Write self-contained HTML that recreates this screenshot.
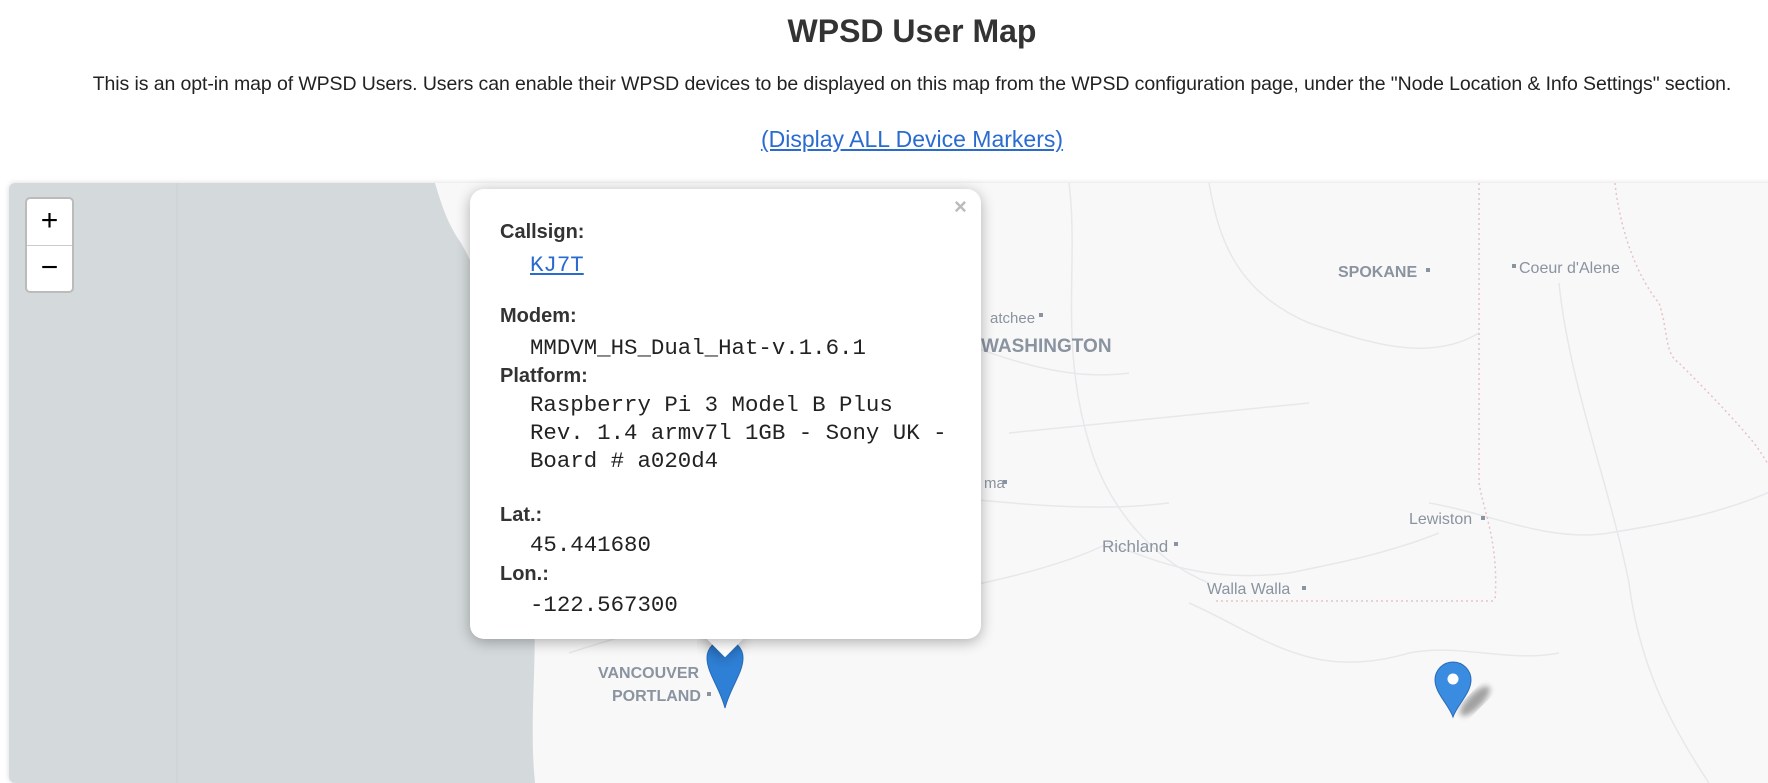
<!DOCTYPE html>
<html><head><meta charset="utf-8"><style>
*{margin:0;padding:0;box-sizing:border-box}
body{width:1768px;height:766px;overflow:hidden;background:#fff;font-family:"Liberation Sans",sans-serif;color:#333;position:relative}
h1{position:absolute;top:13px;left:0;width:1824px;text-align:center;font-size:32px;font-weight:bold;color:#333}
p.d{position:absolute;top:73px;left:0;width:1824px;text-align:center;font-size:19.5px;color:#222;letter-spacing:-0.1px}
a.all{position:absolute;top:126px;left:0;width:1824px;text-align:center;font-size:23px;color:#2a6bd0;text-decoration:underline}
#map{position:absolute;left:9px;top:183px;width:1780px;height:600px;background:#f8f8f8;border-radius:6px;overflow:hidden;box-shadow:0 0 6px rgba(0,0,0,.15)}
.zc{position:absolute;left:25px;top:197px;width:49px;height:96px;border:2px solid #bbb;border-radius:5px;background:#fff}
.zc div{height:46px;text-align:center;font-size:30px;line-height:44px;color:#000}
.zc div+div{border-top:1px solid #ccc}
.pop{position:absolute;left:470px;top:189px;width:511px;height:450px;background:#fff;border-radius:14px;box-shadow:0 3px 14px rgba(0,0,0,.3)}
.tip{position:absolute;left:697px;top:637px;width:56px;height:30px;overflow:hidden}
.tip div{width:30px;height:30px;background:#fff;transform:rotate(45deg);margin:-16px auto 0;box-shadow:0 3px 14px rgba(0,0,0,.3)}
.l{position:absolute;left:500px;font-size:20px;font-weight:bold;color:#333}
.v{position:absolute;left:530px;font-family:"Liberation Mono",monospace;font-size:22.4px;color:#222}
.x{position:absolute;left:954px;top:194px;font-size:22px;color:#bbb;font-weight:bold}
svg text{font-family:"Liberation Sans",sans-serif;fill:#8a93a0}
</style></head><body>
<h1>WPSD User Map</h1>
<p class="d">This is an opt-in map of WPSD Users. Users can enable their WPSD devices to be displayed on this map from the WPSD configuration page, under the "Node Location &amp; Info Settings" section.</p>
<a class="all" href="#">(Display ALL Device Markers)</a>
<div id="map">
<svg width="1780" height="600" style="position:absolute;left:0;top:0">
<defs><filter id="b"><feGaussianBlur stdDeviation="3"/></filter></defs>
<path d="M0 0H426 C432 20 438 40 452 60 C470 90 480 130 485 170 C490 210 470 260 500 290 C510 330 520 380 525 430 C528 480 520 540 526 600 H0Z" fill="#d4dadc"/>
<line x1="168" y1="0" x2="168" y2="600" stroke="#cfd5d8" stroke-width="2"/>
<g fill="none" stroke="#e6e8eb" stroke-width="1.5">
<path d="M560 470 C620 450 700 430 760 420 C820 410 880 400 950 405 C1000 395 1060 380 1100 360"/>
<path d="M1100 360 C1150 380 1200 400 1280 390 C1330 380 1380 370 1430 350"/>
<path d="M700 60 C760 100 820 120 900 140 C980 170 1050 200 1120 190"/>
<path d="M1060 0 C1070 80 1050 160 1080 260 C1100 330 1150 380 1200 400"/>
<path d="M1000 250 C1100 240 1200 230 1300 220"/>
<path d="M600 300 C700 320 800 300 900 310 C1000 320 1080 330 1160 320"/>
<path d="M1420 320 C1480 330 1540 360 1600 350 C1660 340 1720 330 1780 300"/>
<path d="M1550 100 C1560 200 1600 300 1620 400 C1630 480 1660 540 1700 600"/>
<path d="M1180 420 C1250 450 1300 500 1400 470 C1450 460 1500 480 1550 470"/>
<path d="M1200 0 C1210 60 1230 110 1300 140 C1360 160 1420 180 1470 150"/>
</g>
<path d="M1470 0 V300 C1475 330 1490 360 1486 418 M1207 418 H1486" fill="none" stroke="#e7c2c6" stroke-width="1.5" stroke-dasharray="2 3"/>
<path d="M1606 0 C1610 40 1625 90 1650 120 C1660 150 1655 170 1670 180 C1690 200 1720 230 1745 260 C1760 280 1770 300 1780 330" fill="none" stroke="#e7c2c6" stroke-width="1.5" stroke-dasharray="2 3"/>
<text x="1329" y="94" font-size="16" font-weight="bold">SPOKANE</text><rect x="1417" y="85" width="4" height="4" fill="#8a93a0"/>
<rect x="1503" y="81" width="4" height="4" fill="#8a93a0"/><text x="1510" y="90" font-size="16">Coeur d'Alene</text>
<text x="972" y="169" font-size="19" font-weight="bold">WASHINGTON</text>
<text x="981" y="140" font-size="15">atchee</text><rect x="1030" y="130" width="4" height="4" fill="#8a93a0"/>
<text x="975" y="305" font-size="15">ma</text><rect x="994" y="297" width="4" height="4" fill="#8a93a0"/>
<text x="1093" y="369" font-size="17">Richland</text><rect x="1165" y="359" width="4" height="4" fill="#8a93a0"/>
<text x="1198" y="411" font-size="16">Walla Walla</text><rect x="1293" y="403" width="4" height="4" fill="#8a93a0"/>
<text x="1400" y="341" font-size="16">Lewiston</text><rect x="1472" y="333" width="4" height="4" fill="#8a93a0"/>
<text x="589" y="495" font-size="16" font-weight="bold">VANCOUVER</text>
<text x="603" y="518" font-size="16" font-weight="bold">PORTLAND</text><rect x="698" y="509" width="4" height="4" fill="#8a93a0"/>
<g transform="translate(716,450)"><path d="M0 75 C-5 55 -18 40 -18 25 A18 18 0 0 1 18 25 C18 40 5 55 0 75Z" fill="#2e7fd6" stroke="#2a6bb8"/></g>
<ellipse cx="1466" cy="518" rx="20" ry="7" transform="rotate(-45 1466 518)" fill="rgba(0,0,0,.35)" filter="url(#b)"/>
<g transform="translate(1444,478)"><path d="M0 56 C-4 44 -18 32 -18 19 A18 18 0 0 1 18 19 C18 32 4 44 0 56Z" fill="#3a8ce0" stroke="#2a6bb8"/><circle cx="0" cy="18" r="5.5" fill="#fff"/></g>
</svg>
</div>
<div class="zc"><div>+</div><div>−</div></div>
<div class="tip"><div></div></div>
<div class="pop"></div>
<div class="x">×</div>
<div class="l" style="top:221px">Callsign:</div>
<a class="v" style="top:252px;color:#2a6bd0;text-decoration:underline" href="#">KJ7T</a>
<div class="l" style="top:305px">Modem:</div>
<div class="v" style="top:335px">MMDVM_HS_Dual_Hat-v.1.6.1</div>
<div class="l" style="top:365px">Platform:</div>
<div class="v" style="top:392px">Raspberry Pi 3 Model B Plus</div>
<div class="v" style="top:420px">Rev. 1.4 armv7l 1GB - Sony UK -</div>
<div class="v" style="top:448px">Board # a020d4</div>
<div class="l" style="top:504px">Lat.:</div>
<div class="v" style="top:532px">45.441680</div>
<div class="l" style="top:563px">Lon.:</div>
<div class="v" style="top:592px">-122.567300</div>
</body></html>
